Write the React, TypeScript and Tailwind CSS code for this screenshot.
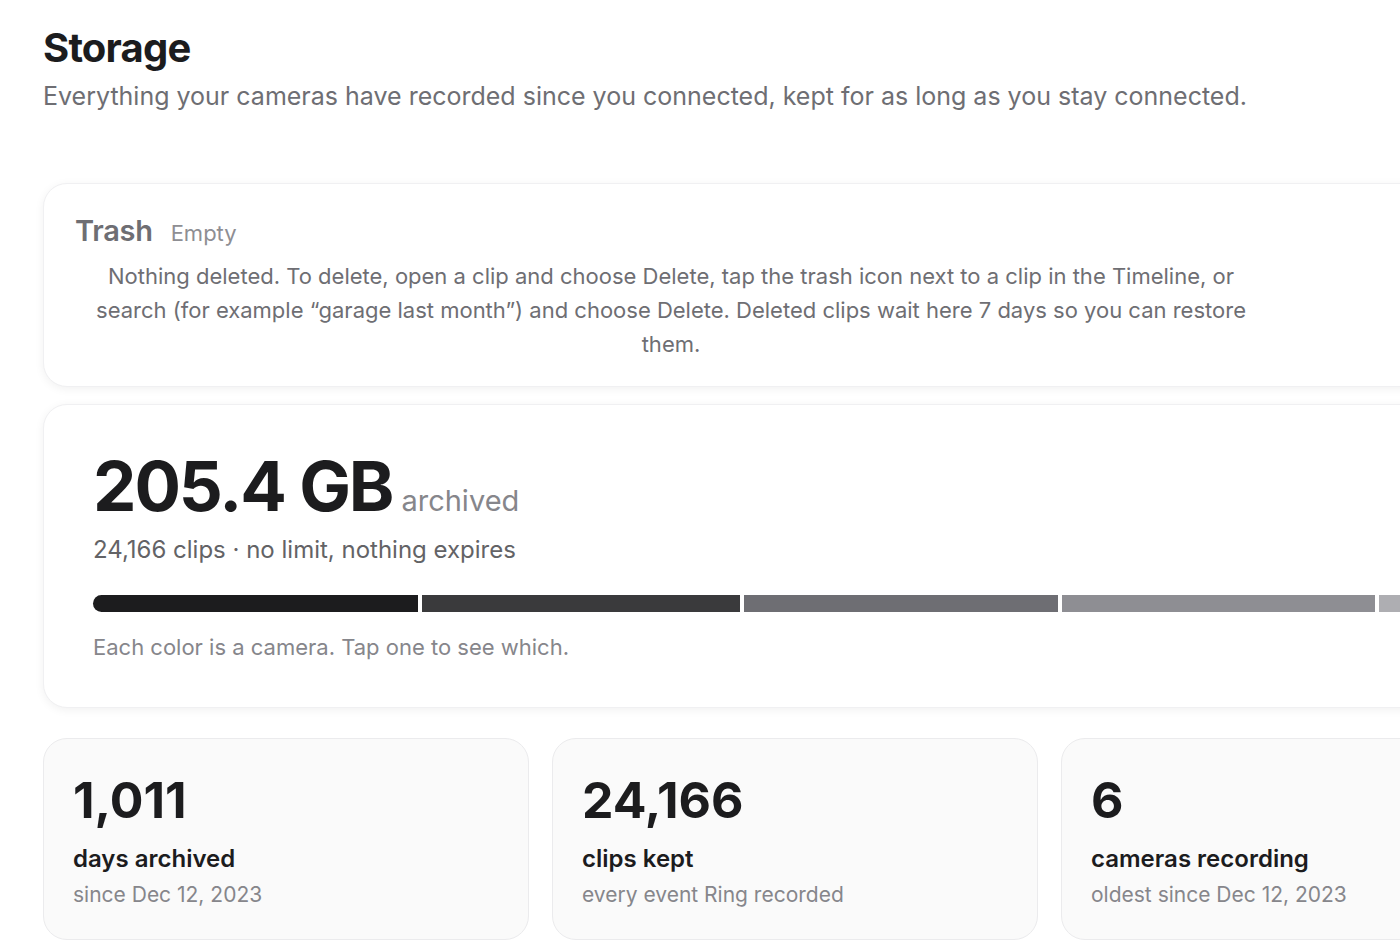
import React from "react";

const segments = [
  { w: "w-[325px]", c: "bg-[#1c1c1e]", round: "rounded-l-full" },
  { w: "w-[318px]", c: "bg-[#3a3a3c]", round: "" },
  { w: "w-[314px]", c: "bg-[#6e6e73]", round: "" },
  { w: "w-[313px]", c: "bg-[#8e8e93]", round: "" },
  { w: "w-[80px]", c: "bg-[#aeaeb2]", round: "" },
  { w: "w-[30px]", c: "bg-[#c7c7cc]", round: "rounded-r-full" },
];

const stats = [
  { value: "1,011", label: "days archived", sub: "since Dec 12, 2023" },
  { value: "24,166", label: "clips kept", sub: "every event Ring recorded" },
  { value: "6", label: "cameras recording", sub: "oldest since Dec 12, 2023" },
];

export default function App() {
  return (
    <div className="w-[1400px] h-[945px] overflow-hidden bg-white font-['Inter',sans-serif] text-[#1c1c1e]">
      <div className="w-[1600px] pl-[43px] pt-[24px]">
        {/* Header */}
        <h1 className="text-[40px] leading-[48px] font-bold tracking-[-0.02em]">Storage</h1>
        <p className="mt-[7px] text-[25px] leading-[34px] text-[#6e6e73]">
          Everything your cameras have recorded since you connected, kept for as long as you stay connected.
        </p>

        <div className="w-[1504px] mt-[70px] flex flex-col">
          {/* Trash */}
          <div className="rounded-[24px] border border-[#f0f0f2] bg-white shadow-[0_2px_10px_rgba(0,0,0,0.06)] pl-[31px] pt-[25px] pb-[25px]">
            <div className="flex items-baseline gap-[18px]">
              <span className="text-[29px] font-semibold text-[#6e6e73] tracking-[-0.01em]">Trash</span>
              <span className="text-[22px] text-[#8e8e93]">Empty</span>
            </div>
            <p className="mt-[6px] ml-[2px] w-[1188px] text-center text-[22px] leading-[34px] text-[#6e6e73]">
              Nothing deleted. To delete, open a clip and choose Delete, tap the trash icon next to a clip in the
              Timeline, or search (for example “garage last month”) and choose Delete. Deleted clips wait here 7 days
              so you can restore them.
            </p>
          </div>

          {/* Archive total */}
          <div className="mt-[17px] rounded-[24px] border border-[#f0f0f2] bg-white shadow-[0_2px_10px_rgba(0,0,0,0.06)] px-[49px] pt-[38px] pb-[45px]">
            <div className="flex items-baseline gap-[9px]">
              <span className="text-[69px] leading-[86px] font-bold tracking-[-0.03em]">205.4 GB</span>
              <span className="text-[29px] text-[#86868b]">archived</span>
            </div>
            <p className="mt-[5px] text-[24px] leading-[32px] text-[#636366]">24,166 clips · no limit, nothing expires</p>
            <div className="mt-[29px] flex gap-[4px] h-[17px]">
              {segments.map((s, i) => (
                <div key={i} className={`${s.w} ${s.c} ${s.round} h-full shrink-0`} />
              ))}
            </div>
            <p className="mt-[20px] text-[22px] leading-[30px] text-[#86868b]">Each color is a camera. Tap one to see which.</p>
          </div>

          {/* Stats */}
          <div className="mt-[30px] grid grid-cols-3 gap-[23px]">
            {stats.map((s) => (
              <div
                key={s.label}
                className="h-[202px] rounded-[24px] border border-[#ebebed] bg-[#fafafa] px-[29px] pt-[32px]"
              >
                <div className="text-[50px] leading-[58px] font-bold">{s.value}</div>
                <div className="mt-[14px] text-[24px] leading-[32px] font-semibold">{s.label}</div>
                <div className="mt-[5px] text-[21px] leading-[30px] text-[#86868b]">{s.sub}</div>
              </div>
            ))}
          </div>
        </div>
      </div>
    </div>
  );
}
